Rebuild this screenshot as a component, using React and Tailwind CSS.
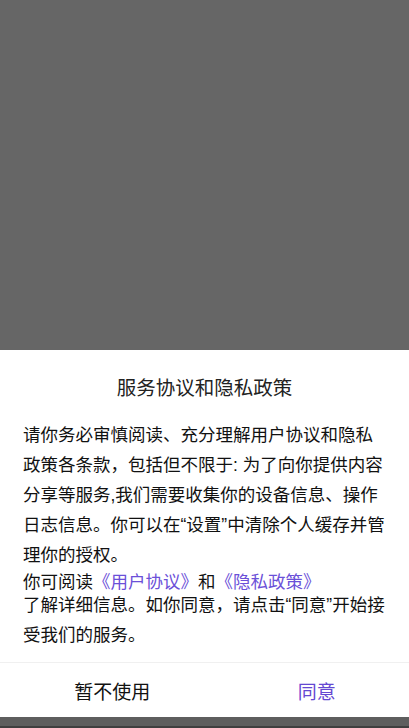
import React from "react";

const font = { fontFamily: '"Liberation Sans", "Noto Sans CJK SC", sans-serif' };

const PrivacyDialog = () => {
  return (
    <div className="flex flex-col h-[728px] w-full bg-[#666666]" style={font}>
      <div className="flex-1"></div>

      <div className="bg-white">
        <h1 className="pt-[28px] text-center text-[19.5px] leading-[20px] text-[#222222]">
          服务协议和隐私政策
        </h1>

        <div className="px-[23px] pb-[12px] mt-[22px] text-[17.5px] text-[#111111]">
          <p className="leading-[30px]">
            请你务必审慎阅读、充分理解用户协议和隐私政策各条款，包括但不限于: 为了向你提供内容分享等服务,我们需要收集你的设备信息、操作日志信息。你可以在“设置”中清除个人缓存并管理你的授权。
          </p>
          <p className="leading-[20px] mt-[2px]">
            你可阅读
            <a href="#" className="text-[#6b50d8]">《用户协议》</a>
            和
            <a href="#" className="text-[#6b50d8]">《隐私政策》</a>
          </p>
          <p className="leading-[30px] -mt-[2px]">
            了解详细信息。如你同意，请点击“同意”开始接受我们的服务。
          </p>
        </div>

        <div className="grid grid-cols-2 h-[55px] border-t border-[#f0f0f0] text-[19px]">
          <button className="flex items-center justify-center pl-[20px] pt-[6px] text-[#111111]">
            暂不使用
          </button>
          <button className="flex items-center justify-center pl-[20px] pt-[6px] text-[#6548d2]">
            同意
          </button>
        </div>
      </div>

      <div className="h-[11px] bg-[#5e5e5e] flex flex-col justify-end">
        <div className="h-[2px] bg-[#3f3f3f]"></div>
      </div>
    </div>
  );
};

export default function App() {
  return <PrivacyDialog />;
}
